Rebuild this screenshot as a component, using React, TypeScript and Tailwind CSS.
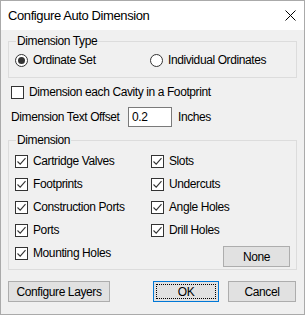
import React from "react";

const font = { fontFamily: '"Liberation Sans", Arial, sans-serif' };

function CheckBox({ checked }: { checked: boolean }) {
  return (
    <span className="w-[13px] h-[13px] border border-[#333] bg-white flex items-center justify-center shrink-0">
      {checked && (
        <svg width="11" height="11" viewBox="0 0 11 11">
          <path d="M1.5 5.5 L4.2 8.2 L9.5 2.2" fill="none" stroke="#333" strokeWidth="1.1" />
        </svg>
      )}
    </span>
  );
}

function Check({ label, checked = true }: { label: string; checked?: boolean }) {
  return (
    <div className="flex items-center h-[18px] gap-[5px]">
      <CheckBox checked={checked} />
      <span>{label}</span>
    </div>
  );
}

function Radio({ label, checked }: { label: string; checked: boolean }) {
  return (
    <div className="flex items-center h-[18px] gap-[5px]">
      <span className="w-[13px] h-[13px] rounded-full border border-[#333] bg-white flex items-center justify-center shrink-0">
        {checked && <span className="w-[7px] h-[7px] rounded-full bg-[#333]" />}
      </span>
      <span>{label}</span>
    </div>
  );
}

function Button({ children, className = "", focused = false }: { children: React.ReactNode; className?: string; focused?: boolean }) {
  return (
    <button
      className={`h-[21px] bg-[#e1e1e1] border flex items-center justify-center ${focused ? "border-[#0078d7]" : "border-[#adadad]"} ${className}`}
    >
      <span className={`flex items-center justify-center ${focused ? "border border-dotted border-black w-[calc(100%-4px)] h-[15px]" : ""}`}>
        {children}
      </span>
    </button>
  );
}

export default function App() {
  const left = ["Cartridge Valves", "Footprints", "Construction Ports", "Ports"];
  const right = ["Slots", "Undercuts", "Angle Holes", "Drill Holes"];
  return (
    <div style={font} className="w-[305px] h-[315px] bg-[#f0f0f0] border border-[#aaaaaa] text-[12px] tracking-[-0.4px] text-black flex flex-col">
      <div className="h-[29px] bg-white flex items-center justify-between pl-[7px] pr-[8px] shrink-0">
        <span className="text-[13px]">Configure Auto Dimension</span>
        <svg width="11" height="11" viewBox="0 0 11 11">
          <path d="M0.5 0.5 L10.5 10.5 M10.5 0.5 L0.5 10.5" stroke="#000" strokeWidth="1" />
        </svg>
      </div>
      <div className="px-[7px] flex flex-col">
        <fieldset className="mt-[4px] border border-[#dcdcdc] px-[6px] pb-[8px]">
          <legend className="ml-[1px] px-[1px] leading-[14px]">Dimension Type</legend>
          <div className="flex items-center pt-[3px]">
            <div className="w-[135px]">
              <Radio label="Ordinate Set" checked />
            </div>
            <Radio label="Individual Ordinates" checked={false} />
          </div>
        </fieldset>
        <div className="mt-[5px] pl-[3px]">
          <Check label="Dimension each Cavity in a Footprint" checked={false} />
        </div>
        <div className="mt-[6px] pl-[3px] flex items-center h-[20px]">
          <span className="w-[117px]">Dimension Text Offset</span>
          <span className="w-[44px] h-[20px] border border-[#7a7a7a] bg-white flex items-center px-[3px]">0.2</span>
          <span className="ml-[6px]">Inches</span>
        </div>
        <fieldset className="mt-[6px] border border-[#dcdcdc] px-[6px] pb-[2px]">
          <legend className="ml-[1px] px-[1px] leading-[14px]">Dimension</legend>
          <div className="pt-[5px] flex flex-col gap-[5px]">
            {left.map((l, i) => (
              <div key={l} className="flex">
                <div className="w-[136px]">
                  <Check label={l} />
                </div>
                <Check label={right[i]} />
              </div>
            ))}
            <div className="flex items-start justify-between">
              <Check label="Mounting Holes" />
              <Button className="w-[67px] mt-[2px]">None</Button>
            </div>
          </div>
        </fieldset>
        <div className="mt-[11px] flex items-center">
          <Button className="w-[102px]">Configure Layers</Button>
          <Button className="w-[66px] ml-[43px]" focused>OK</Button>
          <Button className="w-[68px] ml-[9px]">Cancel</Button>
        </div>
      </div>
    </div>
  );
}
